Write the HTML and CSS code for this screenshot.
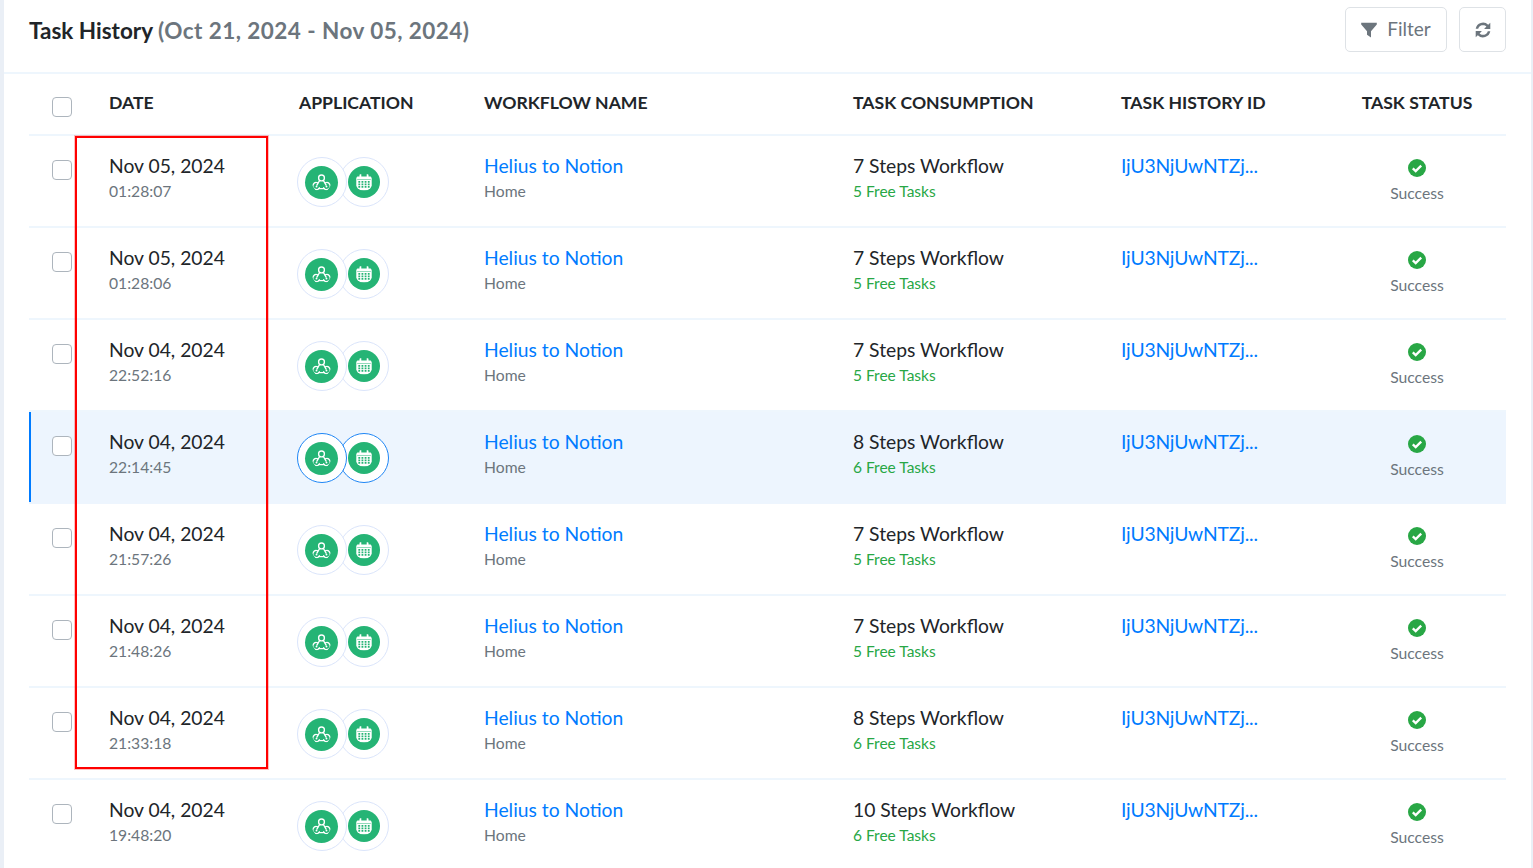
FILE: index.html
```html
<!DOCTYPE html>
<html lang="en">
<head>
<meta charset="UTF-8" />
<title>Task History</title>
<link rel="stylesheet" href="styles.css">
</head>
<body>
  <svg class="defs" aria-hidden="true">
    <symbol id="i-hook" viewBox="0 0 24 24">
      <g fill="none" stroke="#fff" stroke-width="1.700" stroke-linecap="round">
        <circle cx="12" cy="6.200" r="3.700"/>
        <path d="M9.800 9.200 6.200 15.400M14.200 9.200l3.600 6.200M8.400 19.800h7.200"/>
        <path d="M7.400 12.400a4.400 4.400 0 1 0 1.900 6.200"/>
        <path d="M16.600 12.400a4.400 4.400 0 1 1-1.900 6.200"/>
      </g>
      <circle cx="5.700" cy="17.200" r="1.200" fill="#fff"/>
      <circle cx="18.300" cy="17.200" r="1.200" fill="#fff"/>
    </symbol>
    <symbol id="i-cal" viewBox="0 0 24 24">
      <path fill="#fff" fill-rule="evenodd" d="M6 1.500h2.400v3h7.200v-3H18v3h2.700c.9 0 1.600.7 1.600 1.600v15.300c0 .9-.7 1.600-1.600 1.600H3.300c-.9 0-1.600-.7-1.600-1.600V6.100c0-.9.700-1.600 1.600-1.600H6zM2.900 8.600v.8h18.200v-.8zM4.500 10.600V13h2.400v-2.400zm4.200 0V13h2.400v-2.400zm4.200 0V13h2.400v-2.400zm4.200 0V13h2.400v-2.400zM4.500 14V16.400h2.400V14zm4.200 0V16.400h2.400V14zm4.200 0V16.400h2.400V14zm4.200 0V16.400h2.400V14zM4.500 17.400v2.400h2.400v-2.400zm4.200 0v2.400h2.400v-2.400zm4.200 0v2.400h2.400v-2.400zm4.200 0v2.400h2.400v-2.400z"/>
    </symbol>
    <symbol id="i-ok" viewBox="0 0 18 18">
      <circle cx="9" cy="9" r="9" fill="#28a745"/>
      <path d="M4.800 9.300 7.700 12.100 13.200 6.600" fill="none" stroke="#fff" stroke-width="2.300"/>
    </symbol>
  </svg>

  <div class="card">
    <div class="topbar">
      <h1>Task History <span class="range">(Oct 21, 2024 - Nov 05, 2024)</span></h1>
      <div class="actions">
        <button class="btn" type="button">
          <svg class="btn-icon" viewBox="0 0 16 16"><path fill="#6c757d" d="M.2.800h15.600v1.600L10 9.200v6.400l-4-2.800V9.200L.2 2.400z"/></svg>
          <span class="btn-text">Filter</span>
        </button>
        <button class="btn btn-square" type="button" aria-label="Refresh">
          <svg class="btn-icon" viewBox="0 0 16 16" fill="#6c757d"><path d="M.7 6.700A7.400 7.400 0 0 1 13.200 2.800L15.300.7v6.200H9.100l2.300-2.300A4.900 4.900 0 0 0 3.200 6.700z"/><path d="M15.300 9.300A7.400 7.400 0 0 1 2.800 13.200L.7 15.300V9.100h6.200l-2.300 2.300a4.900 4.900 0 0 0 8.200-2.100z"/></svg>
        </button>
      </div>
    </div>

    <table class="tasks">
      <colgroup>
        <col class="c-check"><col class="c-date"><col class="c-app"><col class="c-name"><col class="c-use"><col class="c-id"><col class="c-status">
      </colgroup>
      <thead>
        <tr>
          <th><span class="check"></span></th>
          <th>DATE</th>
          <th>APPLICATION</th>
          <th>WORKFLOW NAME</th>
          <th>TASK CONSUMPTION</th>
          <th>TASK HISTORY ID</th>
          <th class="center">TASK STATUS</th>
        </tr>
      </thead>
      <tbody id="rows"></tbody>
    </table>

    <div class="mark"></div>
  </div>

  <script>
    var data = [
      ["Nov 05, 2024", "01:28:07", 7, 5],
      ["Nov 05, 2024", "01:28:06", 7, 5],
      ["Nov 04, 2024", "22:52:16", 7, 5],
      ["Nov 04, 2024", "22:14:45", 8, 6],
      ["Nov 04, 2024", "21:57:26", 7, 5],
      ["Nov 04, 2024", "21:48:26", 7, 5],
      ["Nov 04, 2024", "21:33:18", 8, 6],
      ["Nov 04, 2024", "19:48:20", 10, 6]
    ];
    var html = "";
    data.forEach(function (d, i) {
      html += '<tr' + (i === 3 ? ' class="active"' : '') + '>' +
        '<td><span class="check"></span></td>' +
        '<td><div class="main">' + d[0] + '</div><div class="sub">' + d[1] + '</div></td>' +
        '<td><div class="apps">' +
          '<span class="app"><svg><use href="#i-hook"/></svg></span>' +
          '<span class="app"><svg><use href="#i-cal"/></svg></span>' +
        '</div></td>' +
        '<td><a class="main link" href="#">Helius to Notion</a><div class="sub">Home</div></td>' +
        '<td><div class="main">' + d[2] + ' Steps Workflow</div><div class="free">' + d[3] + ' Free Tasks</div></td>' +
        '<td><a class="main link hist-id" href="#">IjU3NjUwNTZj...</a></td>' +
        '<td class="center"><svg class="ok"><use href="#i-ok"/></svg><div class="sub status">Success</div></td>' +
        '</tr>';
    });
    document.getElementById("rows").innerHTML = html;
  </script>
</body>
</html>
```

FILE: styles.css
```css
* {margin: 0; padding: 0; box-sizing: border-box;}
html, body {height: 100%; overflow: hidden;}
body {
  font-family: 'Lato', 'Open Sans', sans-serif;
  background: #eaeff6;
  color: #212529;
}
.defs {
  display: none;
}
.card {
  position: relative;
  margin: 0 2px 0 4px;
  height: 100%;
  background: #fff;
}
.topbar {
  display: flex;
  justify-content: space-between;
  align-items: center;
  height: 74px;
  padding: 0 25px 10px 25px;
  border-bottom: 2px solid #eef6fd;
}
h1 {
  margin-bottom: 2px;
  font-size: 22.5px;
  font-weight: 700;
  color: #212529;
}
.range {
  color: #6c757d;
  letter-spacing: 0.45px;
}
.actions {
  display: flex;
  gap: 12px;
  margin-bottom: 3px;
}
.btn {
  display: flex;
  align-items: center;
  justify-content: center;
  gap: 10px;
  width: 102px;
  height: 45px;
  background: #fff;
  border: 1px solid #dee2e6;
  border-radius: 5px;
  color: #6c757d;
  font-family: inherit;
  font-size: 19px;
}
.btn-text {
  margin-bottom: 3px;
}
.btn-square {
  width: 47px;
}
.btn-icon {
  width: 16px;
  height: 16px;
}
.tasks {
  width: 1477px;
  margin-left: 25px;
  table-layout: fixed;
  border-collapse: separate;
  border-spacing: 0;
}
.c-check {width: 80px;}
.c-date {width: 190px;}
.c-app {width: 185px;}
.c-name {width: 369px;}
.c-use {width: 268px;}
.c-id {width: 207px;}
.c-status {width: 178px;}
th {
  height: 62px;
  padding-bottom: 4px;
  text-align: left;
  font-size: 17.6px;
  font-weight: 700;
  color: #212529;
  vertical-align: middle;
  border-bottom: 2px solid #eef6fd;
}
th .check {
  margin-top: 10px;
}
td {
  height: 92px;
  padding-top: 16px;
  vertical-align: top;
  border-bottom: 2px solid #eef6fd;
}
.center {
  text-align: center;
}
th:first-child, td:first-child {
  padding-left: 23px;
}
.check {
  display: block;
  width: 20px;
  height: 20px;
  background: #fff;
  border: 1px solid #adb5bd;
  border-radius: 4px;
}
td .check {
  margin-top: 8px;
}
.main {
  display: block;
  font-size: 19.3px;
  line-height: 27px;
  color: #212529;
}
.link {
  color: #007bff;
  text-decoration: none;
}
.hist-id {
  letter-spacing: -0.15px;
}
.sub {
  margin-top: 1px;
  font-size: 15.7px;
  line-height: 22px;
  color: #6c757d;
}
.free {
  margin-top: 1px;
  font-size: 15.5px;
  line-height: 22px;
  color: #28a745;
}
.apps {
  display: flex;
  margin-left: -2px;
  margin-top: 5px;
}
.app {
  display: flex;
  align-items: center;
  justify-content: center;
  width: 50px;
  height: 50px;
  background: #fff;
  border: 1px solid #dbe5fb;
  border-radius: 50%;
}
.app:first-child {
  position: relative;
  z-index: 1;
}
.app + .app {
  margin-left: -8px;
}
.app svg {
  width: 33px;
  height: 33px;
  margin-right: 1px;
  padding: 7px;
  background: #25b475;
  border-radius: 50%;
}
.app + .app svg {
  width: 32px;
  height: 32px;
  margin-right: 0;
}
.ok {
  display: block;
  width: 18px;
  height: 18px;
  margin: 7px auto 0;
}
.status {
  margin-top: 5px;
}
tr.active td {
  background: #edf5fe;
  border-bottom-color: #edf5fe;
}
tr.active td:first-child {
  box-shadow: inset 2px 0 0 #007bff;
}
tr.active .app {
  border-color: #1e86f5;
}
.mark {
  position: absolute;
  left: 71px;
  top: 136px;
  width: 193px;
  height: 633px;
  border: 2px solid #f00;
  box-shadow: 0 0 0 1px rgba(255, 0, 0, 0.25);
  pointer-events: none;
}
```
